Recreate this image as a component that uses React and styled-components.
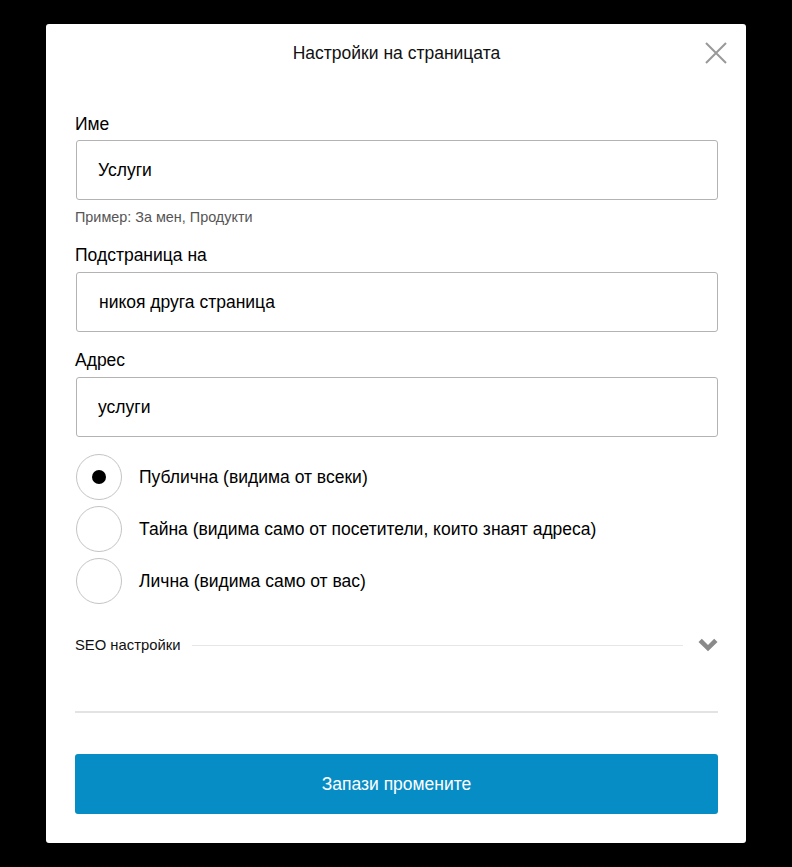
import { useState } from 'react';
import styled, { createGlobalStyle } from 'styled-components';

const GlobalStyle = createGlobalStyle`
  html, body {
    margin: 0;
    padding: 0;
    background: #000;
  }
  body {
    font-family: "Liberation Sans", Arial, sans-serif;
  }
  * {
    box-sizing: border-box;
  }
`;

const Overlay = styled.div`
  min-height: 100vh;
  display: flex;
  align-items: center;
  justify-content: center;
`;

const Modal = styled.div`
  position: relative;
  width: 700px;
  background: #fff;
  border-radius: 3px;
  padding: 19px 28px 29px 29px;
`;

const Title = styled.h2`
  margin: 0;
  font-size: 17.5px;
  line-height: 20px;
  font-weight: normal;
  color: #111;
  text-align: center;
`;

const CloseButton = styled.button`
  position: absolute;
  top: 17px;
  right: 18px;
  width: 24px;
  height: 24px;
  padding: 0;
  border: none;
  background: none;
  cursor: pointer;
  display: flex;
`;

const Field = styled.div`
  margin-top: ${(p) => p.$top}px;
  padding-left: 1px;
`;

const Label = styled.label`
  display: block;
  margin-left: -1px;
  margin-bottom: ${(p) => p.$gap || 7}px;
  font-size: 17.5px;
  line-height: 20px;
  color: #000;
`;

const TextInput = styled.input`
  display: block;
  width: 100%;
  height: 60px;
  padding: 0 0 0 21px;
  border: 1px solid #b3b3b3;
  border-radius: 3px;
  font-family: inherit;
  font-size: 17.5px;
  color: #000;
  background: #fff;
  outline: none;

  &:focus {
    border-color: #078dc6;
  }
`;

const Select = styled.select`
  display: block;
  width: 100%;
  height: 60px;
  padding: 0 0 0 22px;
  border: 1px solid #b3b3b3;
  border-radius: 3px;
  font-family: inherit;
  font-size: 17.5px;
  color: #000;
  background: #fff;
  appearance: none;
  outline: none;
`;

const Hint = styled.div`
  margin-top: 9px;
  margin-left: -1px;
  font-size: 14.4px;
  line-height: 16px;
  color: #555;
`;

const RadioGroup = styled.div`
  margin-top: 17px;
  padding-left: 1px;
  display: flex;
  flex-direction: column;
  gap: 6px;
`;

const RadioRow = styled.label`
  display: flex;
  align-items: center;
  gap: 17px;
  cursor: pointer;
  font-size: 17.5px;
  color: #000;
`;

const RadioCircle = styled.span`
  width: 46px;
  height: 46px;
  flex-shrink: 0;
  border: 1px solid #c4c4c4;
  border-radius: 50%;
  display: flex;
  align-items: center;
  justify-content: center;

  &::after {
    content: '';
    width: 14px;
    height: 14px;
    border-radius: 50%;
    background: #000;
    display: ${(p) => (p.$checked ? 'block' : 'none')};
  }
`;

const HiddenRadio = styled.input`
  position: absolute;
  opacity: 0;
  pointer-events: none;
`;

const SeoRow = styled.button`
  margin-top: 31px;
  width: 100%;
  height: 20px;
  padding: 0;
  border: none;
  background: none;
  display: flex;
  align-items: center;
  cursor: pointer;
  font-family: inherit;
`;

const SeoText = styled.span`
  font-size: 14.8px;
  color: #111;
  white-space: nowrap;
`;

const SeoLine = styled.span`
  flex: 1;
  height: 1px;
  background: #e6e6e6;
  margin: 0 15px 0 12px;
`;

const Divider = styled.hr`
  margin: 56px 0 0;
  border: none;
  height: 2px;
  background: #e3e3e3;
`;

const SaveButton = styled.button`
  margin-top: 41px;
  width: 100%;
  height: 60px;
  border: none;
  border-radius: 3px;
  background: #078dc6;
  color: #fff;
  font-family: inherit;
  font-size: 17.5px;
  cursor: pointer;

  &:hover {
    background: #067fb3;
  }
`;

const CloseIcon = () => (
  <svg width="24" height="24" viewBox="0 0 24 24">
    <path d="M2 2 L22 22 M22 2 L2 22" stroke="#999" strokeWidth="2" fill="none" />
  </svg>
);

const ChevronIcon = () => (
  <svg width="20" height="14" viewBox="0 0 20 14">
    <path d="M0.5 4 L3.8 0.8 L10 7 L16.2 0.8 L19.5 4 L10 13.3 Z" fill="#8a8a8a" />
  </svg>
);

const visibilityOptions = [
  { id: 'public', label: 'Публична (видима от всеки)' },
  { id: 'secret', label: 'Тайна (видима само от посетители, които знаят адреса)' },
  { id: 'private', label: 'Лична (видима само от вас)' },
];

export default function App() {
  const [name, setName] = useState('Услуги');
  const [address, setAddress] = useState('услуги');
  const [visibility, setVisibility] = useState('public');

  return (
    <>
      <GlobalStyle />
      <Overlay>
        <Modal>
          <Title>Настройки на страницата</Title>
          <CloseButton aria-label="Затвори">
            <CloseIcon />
          </CloseButton>

          <Field $top={51}>
            <Label $gap={6}>Име</Label>
            <TextInput value={name} onChange={(e) => setName(e.target.value)} />
            <Hint>Пример: За мен, Продукти</Hint>
          </Field>

          <Field $top={20}>
            <Label>Подстраница на</Label>
            <Select defaultValue="none">
              <option value="none">никоя друга страница</option>
            </Select>
          </Field>

          <Field $top={18}>
            <Label>Адрес</Label>
            <TextInput value={address} onChange={(e) => setAddress(e.target.value)} />
          </Field>

          <RadioGroup>
            {visibilityOptions.map((opt) => (
              <RadioRow key={opt.id}>
                <HiddenRadio
                  type="radio"
                  name="visibility"
                  checked={visibility === opt.id}
                  onChange={() => setVisibility(opt.id)}
                />
                <RadioCircle $checked={visibility === opt.id} />
                {opt.label}
              </RadioRow>
            ))}
          </RadioGroup>

          <SeoRow>
            <SeoText>SEO настройки</SeoText>
            <SeoLine />
            <ChevronIcon />
          </SeoRow>

          <Divider />

          <SaveButton>Запази промените</SaveButton>
        </Modal>
      </Overlay>
    </>
  );
}
